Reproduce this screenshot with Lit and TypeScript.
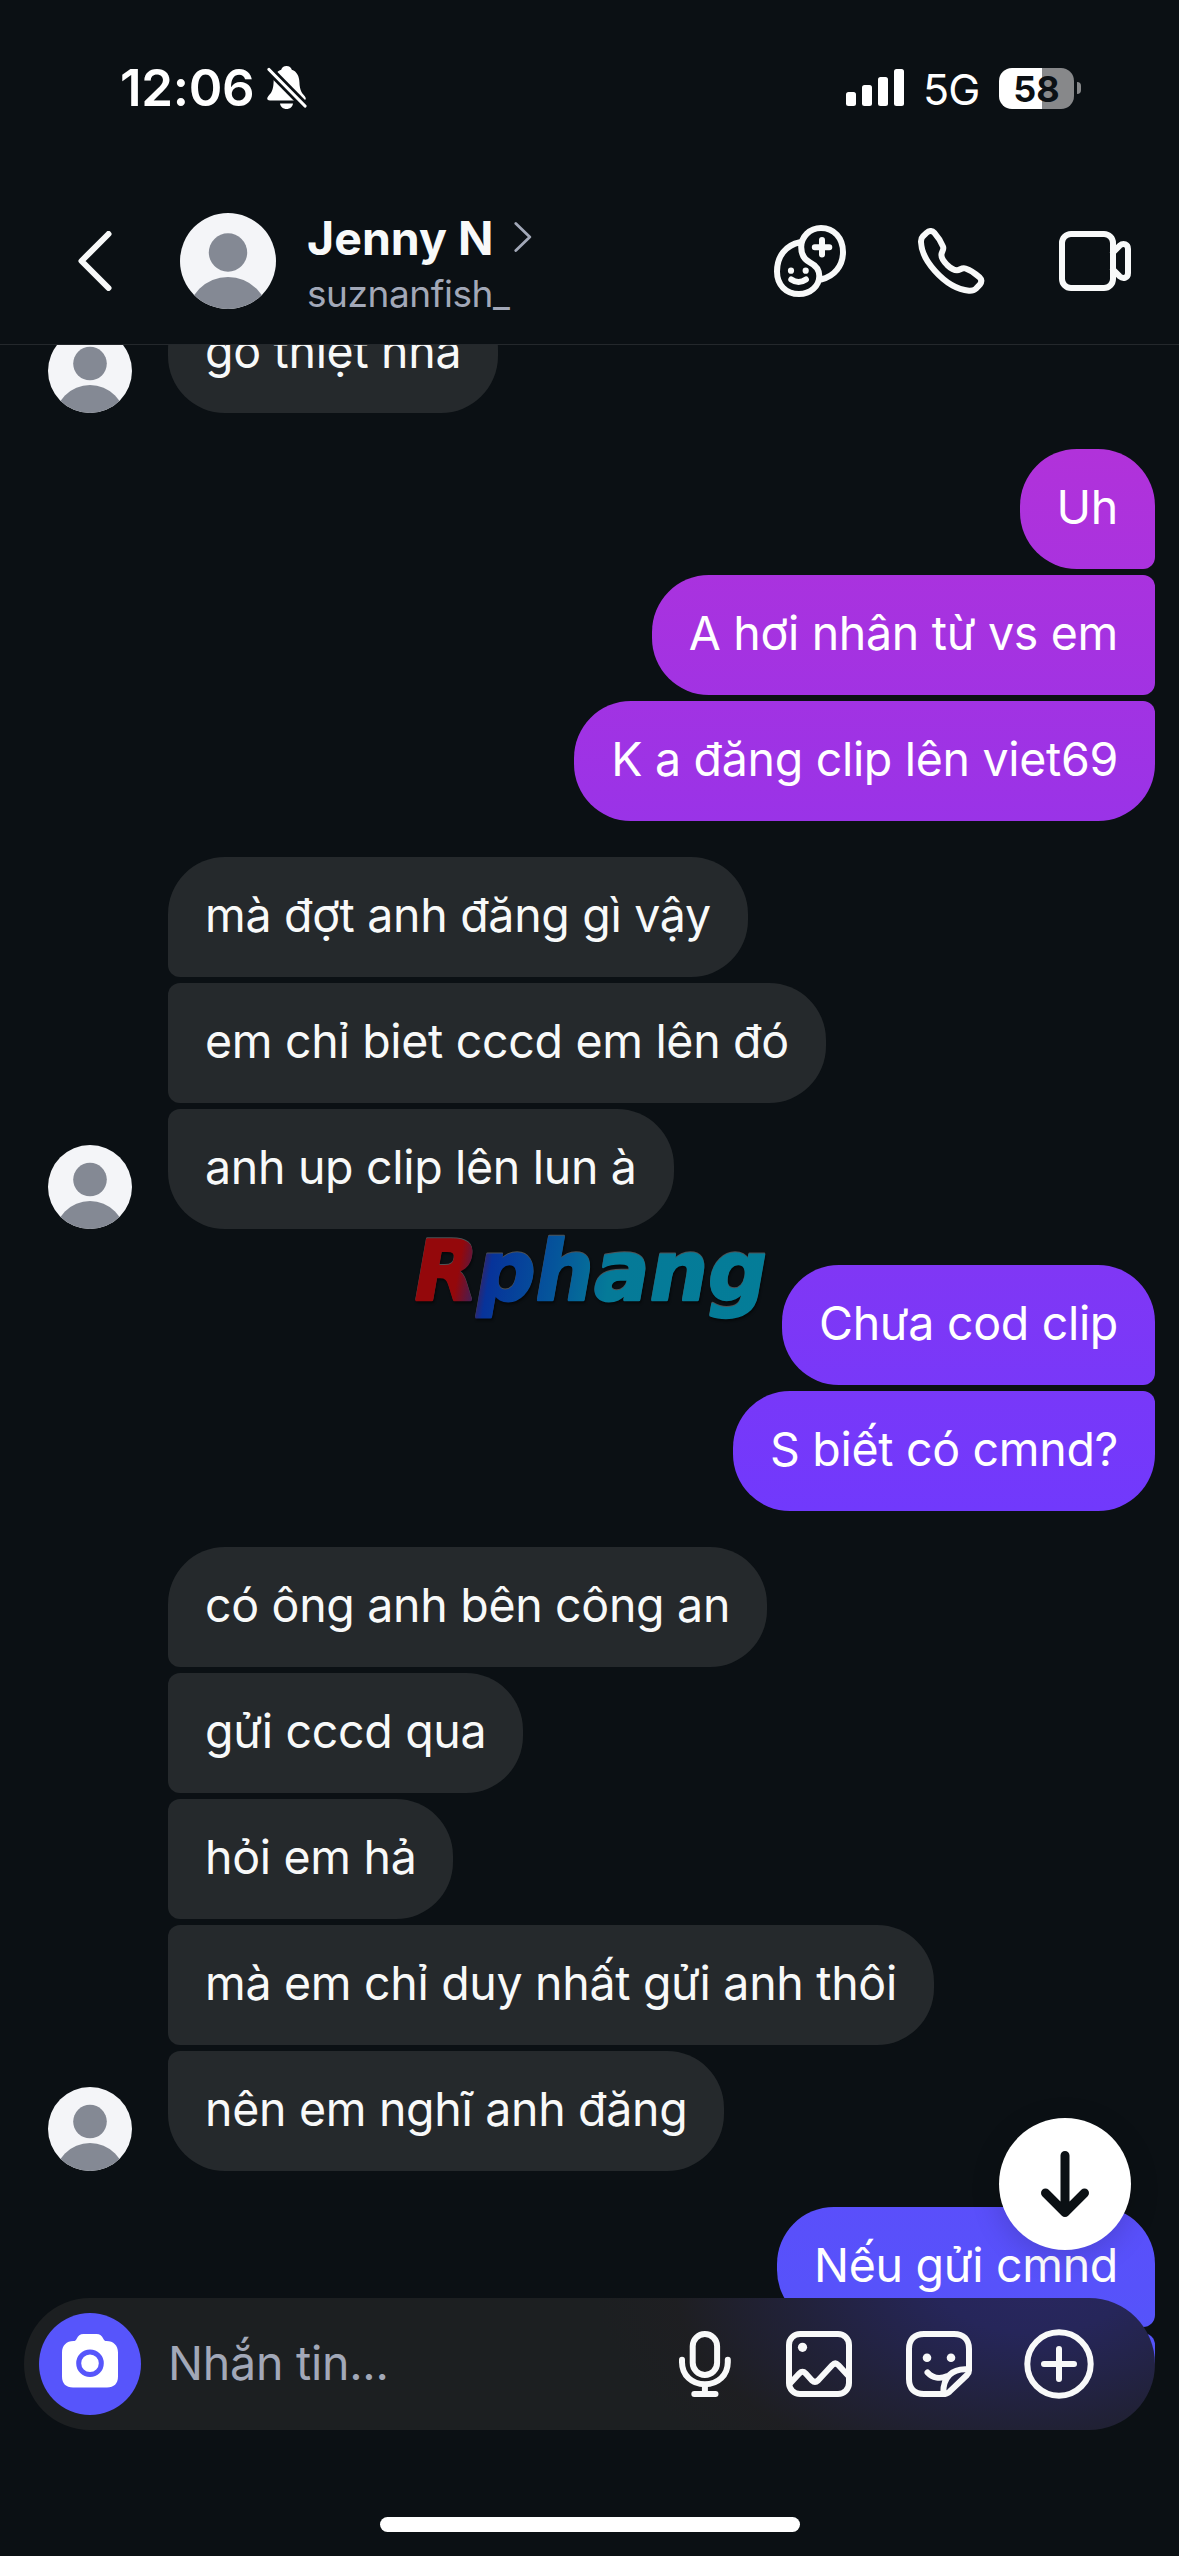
import { LitElement, html, css, svg } from "lit";
import { customElement, property } from "lit/decorators.js";
import { classMap } from "lit/directives/class-map.js";

interface Group {
  from: "them" | "me";
  items: string[];
}

const conversation: Group[] = [
  { from: "them", items: ["gõ thiệt nha"] },
  { from: "me", items: ["Uh", "A hơi nhân từ vs em", "K a đăng clip lên viet69"] },
  { from: "them", items: ["mà đợt anh đăng gì vậy", "em chỉ biet cccd em lên đó", "anh up clip lên lun à"] },
  { from: "me", items: ["Chưa cod clip", "S biết có cmnd?"] },
  {
    from: "them",
    items: ["có ông anh bên công an", "gửi cccd qua", "hỏi em hả", "mà em chỉ duy nhất gửi anh thôi", "nên em nghĩ anh đăng"],
  },
  { from: "me", items: ["Nếu gửi cmnd", ""] },
];

const icons = {
  bell: html`<svg width="40" height="44" viewBox="0 0 40 44">
    <path fill="#fff" d="M19.5 0C16.7 0 14.8 1.6 14.2 3.8 9 5.6 6.8 10.3 6.6 16 6.3 24.500 4.200 26.800 1.400 30 -.8 32.600.2 34.500 3 34.500H36c2.800 0 3.800-1.900 1.600-4.500C34.800 26.800 32.700 24.500 32.400 16 32.200 10.300 30 5.600 24.800 3.800 24.200 1.600 22.300 0 19.500 0Z"/>
    <path fill="#fff" d="M13 37.500h13c-.5 3.400-3 5.500-6.500 5.500s-6-2.100-6.500-5.500Z"/>
    <path d="M2 3.500 38 40" stroke="#0b1014" stroke-width="8.500"/>
    <path d="M2 3.500 38 40" stroke="#fff" stroke-width="3.200" stroke-linecap="round"/></svg>`,
  signal: html`<svg width="58" height="38" viewBox="0 0 58 38" fill="#fff">
    <rect y="23" width="10" height="14" rx="2.500"/><rect x="16" y="16" width="10" height="21" rx="2.500"/>
    <rect x="32" y="8" width="10" height="29" rx="2.500"/><rect x="48" y="0" width="10" height="37" rx="2.500"/></svg>`,
  back: html`<svg class="line" width="34" height="60" viewBox="0 0 34 60"><path d="M30.500 3 3.500 30l27 27"/></svg>`,
  next: html`<svg width="18" height="30" viewBox="0 0 18 30" fill="none" stroke="#a2a8b8" stroke-width="2.800" stroke-linecap="round" stroke-linejoin="round"><path d="M1.800 1.500 15.800 15l-14 13.500"/></svg>`,
  duo: html`<svg class="line" width="72" height="72" viewBox="0 0 72 72">
    <path d="M47 54.500C60 51.500 69 41 69 27 69 13 60 3 47 3 35.500 3 27.200 12 27.200 22 27.200 29 30 34.500 36 37.500 42 40.500 45.300 45 45.300 51 45.300 61 36.500 69 25 69 12 69 3 60 3 46.500 3 31 12 20 26 17.200"/>
    <path d="M48 15v14.500M40.800 22.300h14.500M17.300 54.500q7.300 5 14.600 0"/>
    <g fill="#f8f9f9" stroke="none"><circle cx="17" cy="45.700" r="3.100"/><circle cx="31.700" cy="45.700" r="3.100"/></g></svg>`,
  phone: html`<svg class="line" width="67" height="66" viewBox="0 0 67 66">
    <path d="M8.500 4.900C11.200 2.400 14 2.300 16.300 4.800 20 9 23 13.500 25 18.500 26.400 22 23.400 23.500 23.400 27 23.400 30 26 33.700 29.200 37 32.500 40.200 36 42.300 39 42.300 42.200 42.300 43.500 39.200 47.500 40.500 52.500 42.200 57.500 45.500 61.500 49.200 64 51.600 64 53.800 61.800 56.700L58 60.600C56 62.500 54 62.900 51 62.700 38 61.500 26 53 17 43 8.500 33.500 3.300 23.500 3 14 2.900 11 3.500 9.700 5 8.200Z"/></svg>`,
  video: html`<svg class="line" width="72" height="60" viewBox="0 0 72 60">
    <rect x="3" y="3" width="51" height="54" rx="9"/>
    <path d="M54 21.500 60.500 14.800C64.500 11.500 69 13.300 69 18v24c0 4.700-4.500 6.500-8.500 3.200L54 38.500"/></svg>`,
  camera: html`<svg width="56" height="54" viewBox="0 0 56 54">
    <path fill="#fff" d="M21.500 0h13c3.500 0 5.400 1.700 6.800 4.700.8 1.700 1.500 2.300 3.200 2.300C51.500 7 56 11.500 56 18.500v24C56 49.500 52 53.500 45 53.500H11C4 53.500 0 49.500 0 42.500v-24C0 11.500 4.500 7 11.500 7c1.700 0 2.400-.6 3.200-2.300C16.100 1.700 18 0 21.500 0Z"/>
    <circle cx="28" cy="29.300" r="11.300" fill="none" stroke="#5755fb" stroke-width="5"/></svg>`,
  mic: html`<svg class="line" width="52" height="66" viewBox="0 0 52 66">
    <rect x="13.700" y="3" width="24.400" height="41" rx="12.200"/>
    <path d="M3 28.700v2.500c0 13 10 22.100 22.900 22.100s22.900-9.100 22.900-22.100v-2.500M25.900 54v8M15.300 63h21.200"/></svg>`,
  photo: html`<svg class="line" width="66" height="66" viewBox="0 0 66 66">
    <rect x="3" y="3" width="60" height="60" rx="11"/>
    <path d="M4 52.500 13.500 42.300q3-3 6 0l6.500 7.200q3 2.700 6 0L46.300 34q3-3 6 0L62 44.500"/>
    <circle cx="16.500" cy="16.300" r="4.600" fill="#f8f9f9" stroke="none"/></svg>`,
  sticker: html`<svg class="line" width="66" height="66" viewBox="0 0 66 66">
    <path d="M37 63H18C8.500 63 3 57.500 3 48V18C3 8.500 8.500 3 18 3h30c9.500 0 15 5.500 15 15v21.500c0 2-.5 3-2 4.500L43.500 60.700C41.500 62.500 40 63 37 63Z"/>
    <path d="M62 38.300C46 37 37 46.500 37.300 62M21.500 41.500C26.500 47 34 48.200 41.500 45"/>
    <g fill="#f8f9f9" stroke="none"><circle cx="21" cy="26.800" r="4.300"/><circle cx="45" cy="26.800" r="4.300"/></g></svg>`,
  plus: html`<svg class="line" width="70" height="70" viewBox="0 0 70 70"><circle cx="35" cy="35" r="31.700"/><path d="M35 20v30M20 35h30"/></svg>`,
  down: html`<svg width="48" height="67" viewBox="0 0 48 67" fill="none" stroke="#0b1014" stroke-width="9" stroke-linecap="round" stroke-linejoin="round"><path d="M24 4.500V60M4.500 42 24 61.500 43.500 42"/></svg>`,
};

const iconStyles = css`
  svg { display: block; flex: none; }
  .line { fill: none; stroke: #f8f9f9; stroke-width: 6; stroke-linecap: round; stroke-linejoin: round; }
`;

@customElement("user-avatar")
class UserAvatar extends LitElement {
  @property({ type: Number }) size = 84;
  static styles = css`:host { display: block; flex: none; } svg { display: block; border-radius: 50%; }`;
  render() {
    return html`<svg width=${this.size} height=${this.size} viewBox="0 0 96 96">
      ${svg`<rect width="96" height="96" fill="#f4f5f8"/><circle cx="48" cy="39.500" r="19.200" fill="#848994"/><circle cx="48" cy="104.500" r="40.500" fill="#848994"/>`}
    </svg>`;
  }
}

@customElement("status-bar")
class StatusBar extends LitElement {
  static styles = [iconStyles, css`
    :host { display: flex; align-items: center; height: 176px; box-sizing: border-box; padding: 0 98px 0 120px; color: #fff; }
    .time { font-size: 51px; font-weight: 600; letter-spacing: -0.300px; width: 147px; line-height: 60px; white-space: nowrap; }
    .right { margin-left: auto; display: flex; align-items: center; }
    .net { font-size: 43px; line-height: 50px; margin: 2px 0 0 19px; width: 76px; letter-spacing: -1px; }
    .battery { width: 75px; height: 41px; border-radius: 13px; background: linear-gradient(90deg, #fff 43px, #87888a 43px); color: #0b1014; font-size: 36px; font-weight: 700; line-height: 42px; text-align: center; }
    .nub { width: 4px; height: 12px; margin-left: 3px; border-radius: 0 4px 4px 0; background: #87888a; }
  `];
  render() {
    return html`<span class="time">12:06</span>${icons.bell}
      <div class="right">${icons.signal}<span class="net">5G</span><span class="battery">58</span><span class="nub"></span></div>`;
  }
}

@customElement("chat-header")
class ChatHeader extends LitElement {
  static styles = [iconStyles, css`
    :host { display: flex; align-items: center; box-sizing: border-box; height: 169px; padding: 2px 48px 0 78px; border-bottom: 1px solid #24282c; }
    user-avatar { margin-left: 68px; }
    .who { margin-left: 31px; padding-top: 9px; display: flex; flex-direction: column; }
    .name { display: flex; align-items: center; gap: 21px; font-size: 46.500px; line-height: 56px; font-weight: 700; color: #f8f9f9; white-space: nowrap; }
    .name svg { margin-top: -3px; }
    .handle { font-size: 37px; line-height: 55px; color: #a2a8b8; letter-spacing: -0.450px; }
    .actions { margin-left: auto; display: flex; align-items: center; }
    .actions svg:nth-child(2) { margin: 0 74px 0 72px; }
  `];
  render() {
    return html`${icons.back}<user-avatar .size=${96}></user-avatar>
      <div class="who"><div class="name"><span>Jenny N</span>${icons.next}</div><div class="handle">suznanfish_</div></div>
      <div class="actions">${icons.duo}${icons.phone}${icons.video}</div>`;
  }
}

@customElement("message-group")
class MessageGroup extends LitElement {
  @property({ attribute: false }) group!: Group;
  static styles = css`
    :host { display: block; }
    .group { display: flex; align-items: flex-end; gap: 36px; padding: 0 24px 0 48px; }
    .stack { display: flex; flex-direction: column; align-items: flex-start; gap: 6px; }
    .me { justify-content: flex-end; }
    .me .stack { align-items: flex-end; }
    .bubble { box-sizing: border-box; height: 120px; min-width: 120px; padding: 0 37px; border-radius: 57px; background-color: #25292c; color: #f8f9f9; font-size: 46.500px; line-height: 117px; letter-spacing: -0.310px; white-space: nowrap; }
    .them .bubble:not(:first-child) { border-top-left-radius: 12px; }
    .them .bubble:not(:last-child) { border-bottom-left-radius: 12px; }
    .me .bubble { color: #fff; background: linear-gradient(180deg, #b932d4 345px, #b132da 450px, #9a33e7 820px, #8037f5 1265px, #7139fc 1510px, #5a4ffb 2207px, #5455fa 2364px) fixed; }
    .me .bubble:not(:first-child) { border-top-right-radius: 12px; }
    .me .bubble:not(:last-child) { border-bottom-right-radius: 12px; }
  `;
  render() {
    const mine = this.group.from === "me";
    return html`<div class=${classMap({ group: true, me: mine, them: !mine })}>
      ${mine ? "" : html`<user-avatar .size=${84}></user-avatar>`}
      <div class="stack">${this.group.items.map((t) => html`<div class="bubble">${t}</div>`)}</div>
    </div>`;
  }
}

@customElement("message-composer")
class MessageComposer extends LitElement {
  static styles = [iconStyles, css`
    :host { display: flex; align-items: center; box-sizing: border-box; height: 132px; margin: 0 24px; padding: 0 61px 0 15px; border-radius: 66px;
      background: radial-gradient(ellipse 440px 250px at 1010px -20px, #29275f 0%, #26265a 22%, rgba(34,34,62,.85) 55%, rgba(31,30,34,.6) 82%, rgba(28,31,32,0) 100%), #1c1f21; }
    .camera { display: flex; align-items: center; justify-content: center; width: 102px; height: 102px; border-radius: 50%; background: #5755fb; flex: none; padding-bottom: 7px; box-sizing: border-box; }
    .hint { margin: 0 auto 0 27px; font-size: 46.500px; line-height: 60px; padding-bottom: 3px; color: #a2a8b8; letter-spacing: -0.250px; }
    .tools { display: flex; align-items: center; gap: 54px; }
    .tools svg:first-child { margin-right: 1px; }
    .tools svg:last-child { margin-left: -2px; }
  `];
  render() {
    return html`<div class="camera">${icons.camera}</div><span class="hint">Nhắn tin...</span>
      <div class="tools">${icons.mic}${icons.photo}${icons.sticker}${icons.plus}</div>`;
  }
}

@customElement("app-root")
class AppRoot extends LitElement {
  static styles = [iconStyles, css`
    :host { display: flex; flex-direction: column; position: relative; width: 1179px; height: 2556px; overflow: hidden; background: #0b1014; font-family: Inter, "Noto Sans", sans-serif; }
    .thread { height: 2019px; overflow: hidden; flex: none; }
    .scroll { display: flex; flex-direction: column; gap: 36px; margin-top: -52px; }
    .footer { position: relative; flex: 1; display: flex; flex-direction: column; margin-top: -66px; }
    .home { width: 420px; height: 15px; border-radius: 8px; background: #fff; margin: 87px auto 0; }
    .jump { position: absolute; left: 999px; top: 2118px; width: 132px; height: 132px; border-radius: 50%; background: #fff; display: flex; align-items: center; justify-content: center; box-shadow: 0 6px 30px rgba(0, 0, 0, .16); }
    .mark { position: absolute; left: 400px; top: 1200px; overflow: visible; filter: drop-shadow(0 -1px 0 rgba(255,255,255,.28)) drop-shadow(1px 2px 1px rgba(0,0,0,.5)); }
    .mark text { font: bold 83px "DejaVu Sans", sans-serif; stroke-width: 2.500px; stroke-linejoin: round; }
  `];
  render() {
    return html`<status-bar></status-bar>
      <chat-header></chat-header>
      <div class="thread"><div class="scroll">${conversation.map((g) => html`<message-group .group=${g}></message-group>`)}</div></div>
      <div class="footer"><message-composer></message-composer><div class="home"></div></div>
      <svg class="mark" width="400" height="150" viewBox="0 0 400 150">
        <defs><linearGradient id="ink" gradientUnits="userSpaceOnUse" x1="5" y1="0" x2="360" y2="0">
          <stop offset=".11" stop-color="#94080b"/><stop offset=".16" stop-color="#4a1c50"/><stop offset=".2" stop-color="#07339a"/>
          <stop offset=".38" stop-color="#05559b"/><stop offset=".54" stop-color="#057a98"/><stop offset="1" stop-color="#047d98"/></linearGradient></defs>
        <text transform="translate(9 100) skewX(-10)" x="0" y="0" textLength="354" lengthAdjust="spacingAndGlyphs" fill="url(#ink)" stroke="url(#ink)">Rphang</text>
      </svg>
      <div class="jump">${icons.down}</div>`;
  }
}
